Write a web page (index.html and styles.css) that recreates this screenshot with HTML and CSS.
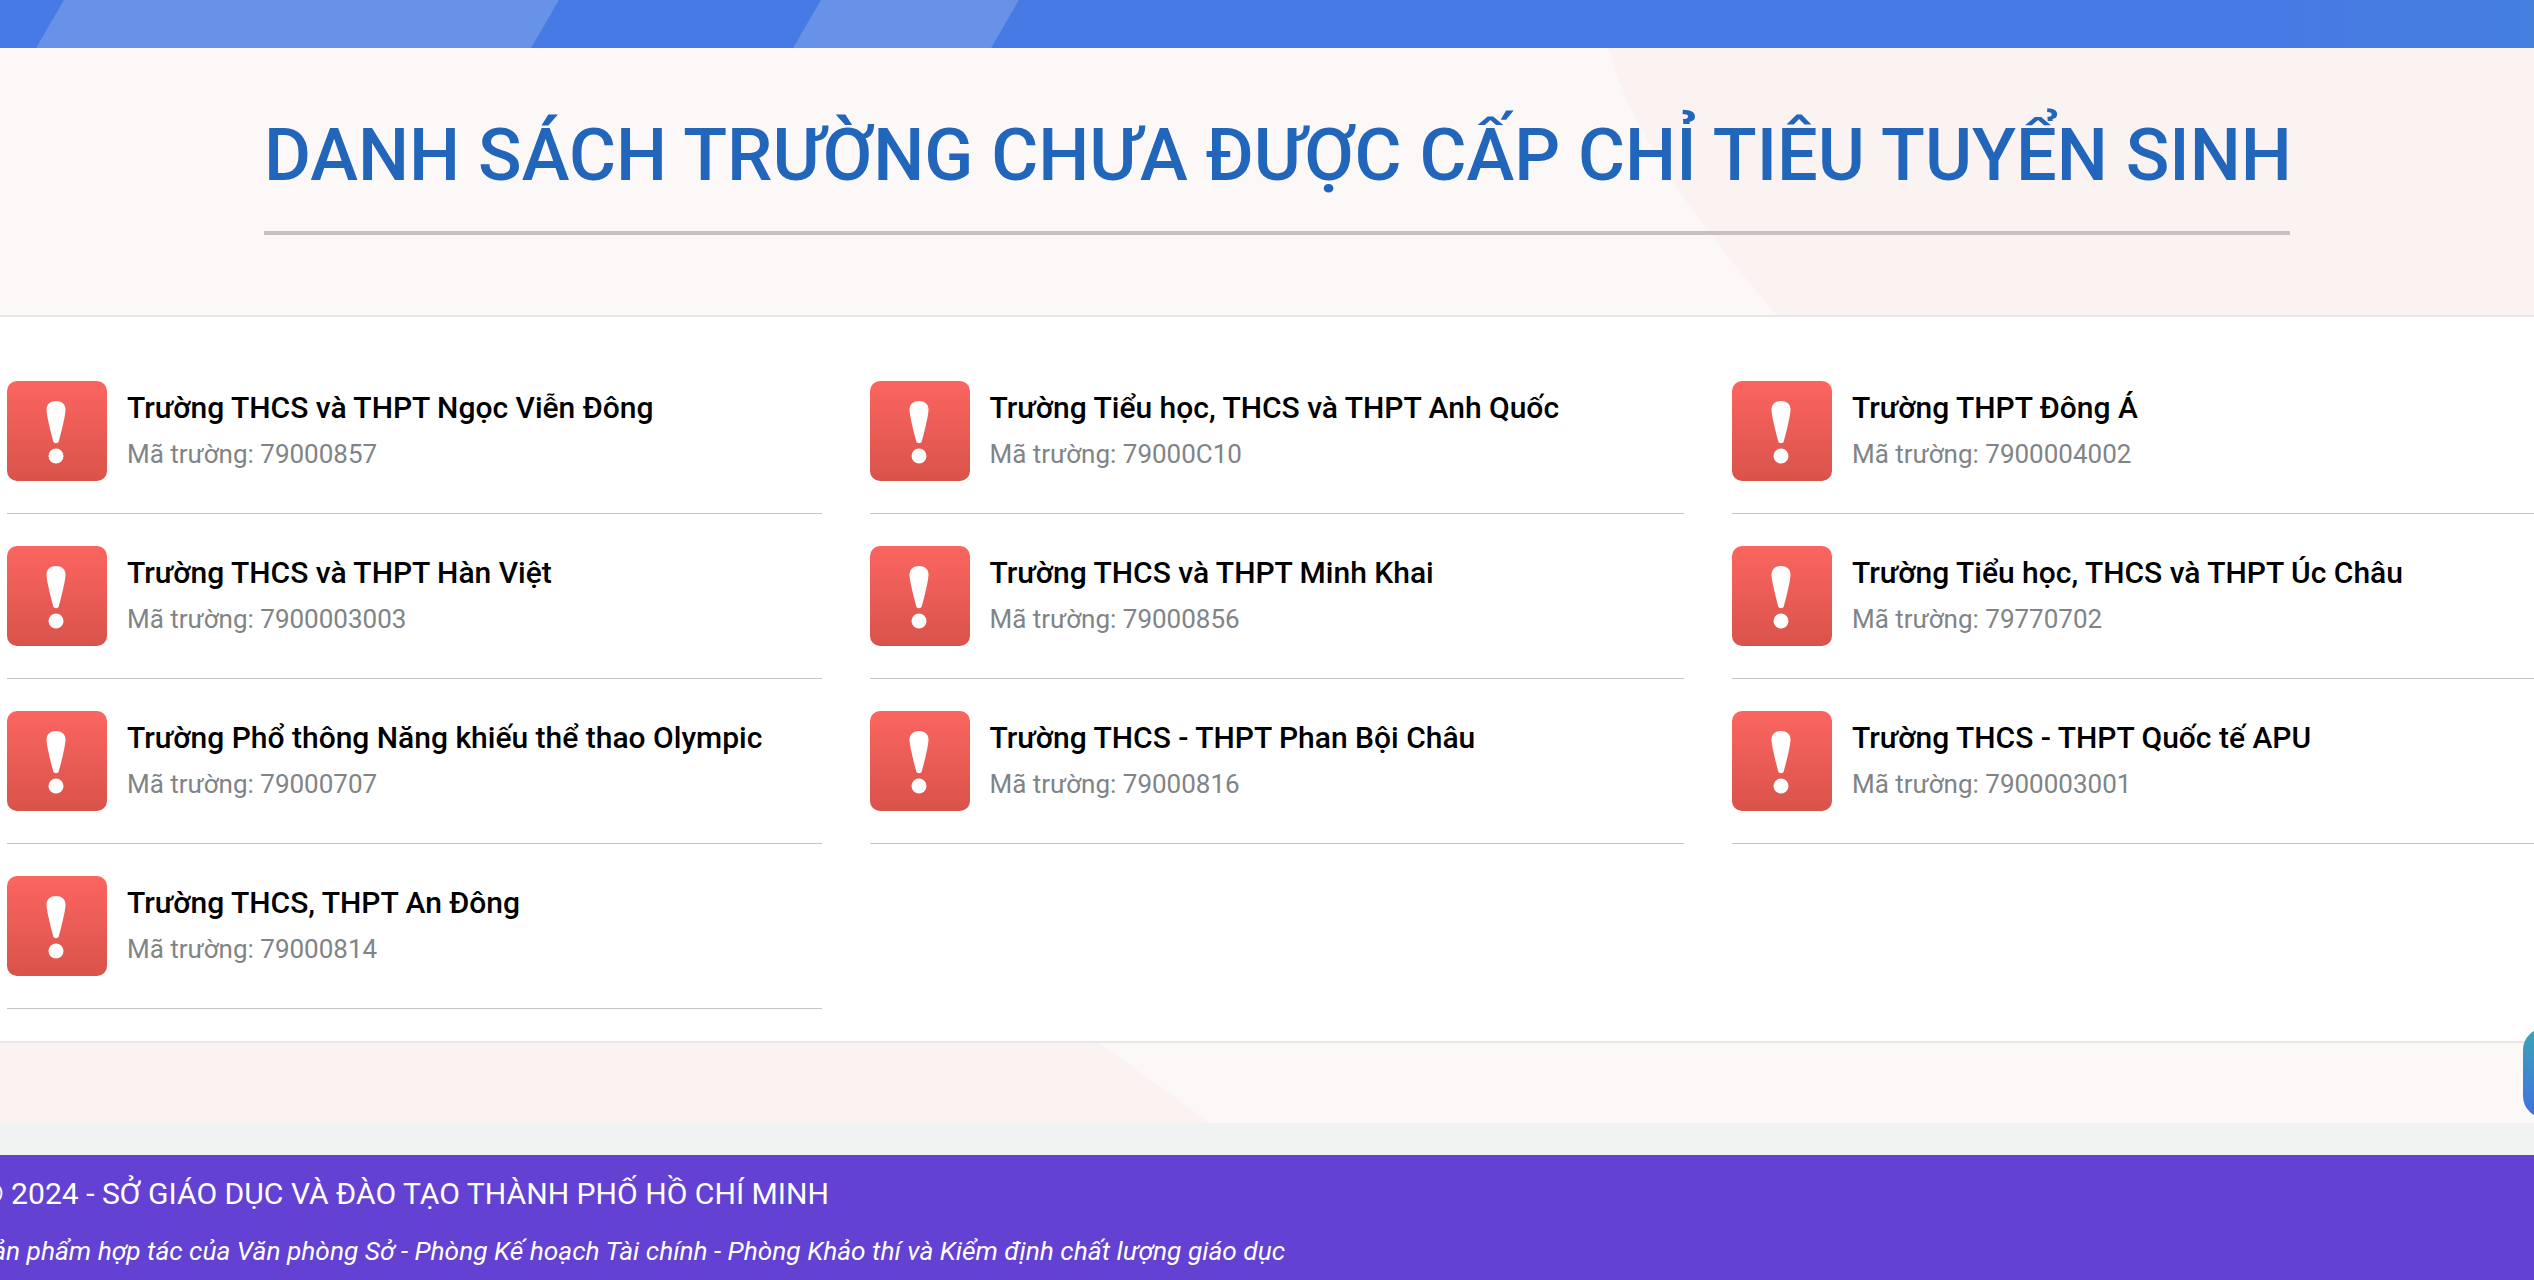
FILE: index.html
```html
<!DOCTYPE html>
<html lang="vi">
<head>
  <meta charset="UTF-8">
  <meta name="viewport" content="width=device-width, initial-scale=1.0">
  <title>Danh sách trường chưa được cấp chỉ tiêu tuyển sinh</title>
  <link rel="stylesheet" href="styles.css">
</head>
<body>
  <div class="top-band">
    <span class="stripe stripe-one"></span>
    <span class="stripe stripe-two"></span>
  </div>

  <header class="page-head">
    <span class="head-shape"></span>
    <h1 class="page-title">DANH SÁCH TRƯỜNG CHƯA ĐƯỢC CẤP CHỈ TIÊU TUYỂN SINH</h1>
  </header>

  <main class="school-list">
    <div class="school">
      <div class="alert-icon"><svg viewBox="0 0 100 100"><path d="M49 20c5.500 0 9.500 3.300 9.500 8.500 0 6-5 26-7 32.500-.5 1.500-4.500 1.500-5 0-2-6.500-7-26.500-7-32.500 0-5.200 4-8.500 9.500-8.500z"/><circle cx="49" cy="75" r="7.500"/></svg></div>
      <div class="school-info">
        <div class="school-name">Trường THCS và THPT Ngọc Viễn Đông</div>
        <div class="school-code">Mã trường: 79000857</div>
      </div>
    </div>
    <div class="school">
      <div class="alert-icon"><svg viewBox="0 0 100 100"><path d="M49 20c5.500 0 9.500 3.300 9.500 8.500 0 6-5 26-7 32.500-.5 1.500-4.500 1.500-5 0-2-6.500-7-26.500-7-32.500 0-5.200 4-8.500 9.500-8.500z"/><circle cx="49" cy="75" r="7.500"/></svg></div>
      <div class="school-info">
        <div class="school-name">Trường Tiểu học, THCS và THPT Anh Quốc</div>
        <div class="school-code">Mã trường: 79000C10</div>
      </div>
    </div>
    <div class="school">
      <div class="alert-icon"><svg viewBox="0 0 100 100"><path d="M49 20c5.500 0 9.500 3.300 9.500 8.500 0 6-5 26-7 32.500-.5 1.500-4.500 1.500-5 0-2-6.500-7-26.500-7-32.500 0-5.200 4-8.500 9.500-8.500z"/><circle cx="49" cy="75" r="7.500"/></svg></div>
      <div class="school-info">
        <div class="school-name">Trường THPT Đông Á</div>
        <div class="school-code">Mã trường: 7900004002</div>
      </div>
    </div>
    <div class="school">
      <div class="alert-icon"><svg viewBox="0 0 100 100"><path d="M49 20c5.500 0 9.500 3.300 9.500 8.500 0 6-5 26-7 32.500-.5 1.500-4.500 1.500-5 0-2-6.500-7-26.500-7-32.500 0-5.200 4-8.500 9.500-8.500z"/><circle cx="49" cy="75" r="7.500"/></svg></div>
      <div class="school-info">
        <div class="school-name">Trường THCS và THPT Hàn Việt</div>
        <div class="school-code">Mã trường: 7900003003</div>
      </div>
    </div>
    <div class="school">
      <div class="alert-icon"><svg viewBox="0 0 100 100"><path d="M49 20c5.500 0 9.500 3.300 9.500 8.500 0 6-5 26-7 32.500-.5 1.500-4.500 1.500-5 0-2-6.500-7-26.500-7-32.500 0-5.200 4-8.500 9.500-8.500z"/><circle cx="49" cy="75" r="7.500"/></svg></div>
      <div class="school-info">
        <div class="school-name">Trường THCS và THPT Minh Khai</div>
        <div class="school-code">Mã trường: 79000856</div>
      </div>
    </div>
    <div class="school">
      <div class="alert-icon"><svg viewBox="0 0 100 100"><path d="M49 20c5.500 0 9.500 3.300 9.500 8.500 0 6-5 26-7 32.500-.5 1.500-4.500 1.500-5 0-2-6.500-7-26.500-7-32.500 0-5.200 4-8.500 9.500-8.500z"/><circle cx="49" cy="75" r="7.500"/></svg></div>
      <div class="school-info">
        <div class="school-name">Trường Tiểu học, THCS và THPT Úc Châu</div>
        <div class="school-code">Mã trường: 79770702</div>
      </div>
    </div>
    <div class="school">
      <div class="alert-icon"><svg viewBox="0 0 100 100"><path d="M49 20c5.500 0 9.500 3.300 9.500 8.500 0 6-5 26-7 32.500-.5 1.500-4.500 1.500-5 0-2-6.500-7-26.500-7-32.500 0-5.200 4-8.500 9.500-8.500z"/><circle cx="49" cy="75" r="7.500"/></svg></div>
      <div class="school-info">
        <div class="school-name">Trường Phổ thông Năng khiếu thể thao Olympic</div>
        <div class="school-code">Mã trường: 79000707</div>
      </div>
    </div>
    <div class="school">
      <div class="alert-icon"><svg viewBox="0 0 100 100"><path d="M49 20c5.500 0 9.500 3.300 9.500 8.500 0 6-5 26-7 32.500-.5 1.500-4.500 1.500-5 0-2-6.500-7-26.500-7-32.500 0-5.200 4-8.500 9.500-8.500z"/><circle cx="49" cy="75" r="7.500"/></svg></div>
      <div class="school-info">
        <div class="school-name">Trường THCS - THPT Phan Bội Châu</div>
        <div class="school-code">Mã trường: 79000816</div>
      </div>
    </div>
    <div class="school">
      <div class="alert-icon"><svg viewBox="0 0 100 100"><path d="M49 20c5.500 0 9.500 3.300 9.500 8.500 0 6-5 26-7 32.500-.5 1.500-4.500 1.500-5 0-2-6.500-7-26.500-7-32.500 0-5.200 4-8.500 9.500-8.500z"/><circle cx="49" cy="75" r="7.500"/></svg></div>
      <div class="school-info">
        <div class="school-name">Trường THCS - THPT Quốc tế APU</div>
        <div class="school-code">Mã trường: 7900003001</div>
      </div>
    </div>
    <div class="school">
      <div class="alert-icon"><svg viewBox="0 0 100 100"><path d="M49 20c5.500 0 9.500 3.300 9.500 8.500 0 6-5 26-7 32.500-.5 1.500-4.500 1.500-5 0-2-6.500-7-26.500-7-32.500 0-5.200 4-8.500 9.500-8.500z"/><circle cx="49" cy="75" r="7.500"/></svg></div>
      <div class="school-info">
        <div class="school-name">Trường THCS, THPT An Đông</div>
        <div class="school-code">Mã trường: 79000814</div>
      </div>
    </div>
  </main>

  <section class="page-tail">
    <span class="tail-shape"></span>
    <span class="float-btn"></span>
  </section>

  <footer class="site-footer">
    <div class="footer-line">© 2024 - SỞ GIÁO DỤC VÀ ĐÀO TẠO THÀNH PHỐ HỒ CHÍ MINH</div>
    <div class="footer-note">Sản phẩm hợp tác của Văn phòng Sở - Phòng Kế hoạch Tài chính - Phòng Khảo thí và Kiểm định chất lượng giáo dục</div>
  </footer>
</body>
</html>
```

FILE: styles.css
```css
html, body {
  margin: 0;
  padding: 0;
  height: 1280px;
  overflow: hidden;
}
body {
  font-family: Roboto, "Liberation Sans", sans-serif;
  background-color: #f1f2f2;
}

/* top band */
.top-band {
  position: relative;
  height: 48px;
  background: linear-gradient(90deg, #487ae5 0%, #487ae5 90%, #4580dd 100%);
  overflow: hidden;
}
.stripe {
  position: absolute;
  top: 0;
  height: 48px;
  background: #6892e8;
  transform: skewX(-30deg);
}
.stripe-one {
  left: 50px;
  width: 495px;
}
.stripe-two {
  left: 807px;
  width: 198px;
}

/* heading */
.page-head {
  position: relative;
  height: 267px;
  background: #fdf8f8;
  border-bottom: 2px solid #e8e6e6;
  padding-left: 264px;
  overflow: hidden;
}
.head-shape {
  position: absolute;
  top: 0;
  left: 1608px;
  right: 0;
  bottom: 0;
  background: #faf3f2;
  clip-path: path("M0 0 L926 0 L926 267 L169 267 Q30 110 0 0 Z");
}
.page-title {
  position: relative;
  width: 2026px;
  margin: 0;
  padding: 65px 0 0;
  height: 118px;
  border-bottom: 4px solid #c4c1c0;
  font-size: 72px;
  line-height: 86px;
  font-weight: 500;
  color: #2166ba;
  white-space: nowrap;
}

/* school list */
.school-list {
  display: grid;
  grid-template-columns: repeat(3, 814.5px);
  grid-auto-rows: 133px;
  column-gap: 48px;
  row-gap: 32px;
  padding: 64px 0 0 7px;
  height: 724px;
  background: #fff;
  box-sizing: border-box;
}
.school {
  display: flex;
  gap: 20px;
  box-sizing: border-box;
  border-bottom: 1px solid #c4c4c4;
}
.alert-icon {
  width: 100px;
  height: 100px;
  border-radius: 10px;
  background: linear-gradient(180deg, #fb6560 0%, #d9534a 100%);
  flex-shrink: 0;
}
.alert-icon svg {
  display: block;
  width: 100px;
  height: 100px;
  fill: #fff;
}
.school-info {
  padding-top: 7px;
}
.school-name {
  font-size: 30px;
  line-height: 40px;
  font-weight: 500;
  color: #000;
}
.school-code {
  margin-top: 6px;
  font-size: 26px;
  line-height: 40px;
  color: #7f8487;
}

/* tail */
.page-tail {
  position: relative;
  height: 80px;
  background: #faf3f2;
  border-top: 2px solid #e8e6e6;
}
.tail-shape {
  position: absolute;
  top: 0;
  left: 1100px;
  right: 0;
  bottom: 0;
  background: #fdf8f8;
  clip-path: polygon(0 0, 100% 0, 100% 100%, 110px 100%);
}
.float-btn {
  position: absolute;
  top: -15px;
  left: 2523px;
  width: 60px;
  height: 90px;
  border-radius: 22px;
  background: linear-gradient(180deg, #3aa5b8 0%, #4070e0 100%);
}

/* footer */
.site-footer {
  margin-top: 32px;
  height: 125px;
  background: #6241d3;
  color: #fff;
  padding-top: 19px;
  box-sizing: border-box;
  white-space: nowrap;
}
.footer-line {
  margin-left: -20px;
  font-size: 30.1px;
  line-height: 40px;
}
.footer-note {
  margin-left: -23px;
  margin-top: 18px;
  font-size: 26.3px;
  line-height: 38px;
  font-style: italic;
}
```
